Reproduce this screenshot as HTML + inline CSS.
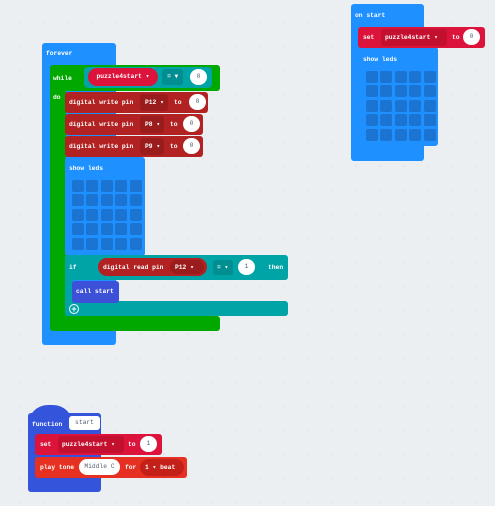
<!DOCTYPE html>
<html><head><meta charset="utf-8"><style>
body{margin:0;width:495px;height:506px;overflow:hidden;background:#eceff1;position:relative;
background-image:radial-gradient(#dfe2e5 0.7px,transparent 1px);background-size:24px 24px;background-position:8px 10px}
.b{position:absolute;border-radius:3px}
.t{position:absolute;color:#fff;font:bold 6.3px "Liberation Mono",monospace;white-space:nowrap;line-height:9px}
.blue{background:#1e90ff}.green{background:#00a800}.teal{background:#00a4a6}
.pin{background:#b22222}.var{background:#dc143c}.mus{background:#e63022}.fn{background:#3455db}
.pill{position:absolute;border-radius:9px;color:#fff;font:bold 6.3px "Liberation Mono",monospace;line-height:9px;text-align:center;white-space:nowrap}
.w{background:#fff;color:#575e75;font-weight:normal}
.grid{position:absolute;display:grid;grid-template-columns:repeat(5,12px);grid-gap:2.4px}
.grid div{width:12px;height:12px;border-radius:2px;background:#1b74d1}
</style></head><body>

<!-- forever -->
<div class="b blue" style="left:42px;top:43px;width:74px;height:302px"></div>
<div class="t" style="left:46px;top:49px">forever</div>
<!-- while -->
<div class="b green" style="left:50px;top:65px;width:170px;height:26px"></div>
<div class="b green" style="left:50px;top:65px;width:16px;height:266px"></div>
<div class="b green" style="left:50px;top:316px;width:170px;height:15px"></div>
<div class="t" style="left:53px;top:74px">while</div>
<div class="t" style="left:53px;top:93px">do</div>
<div class="b teal" style="left:84px;top:67px;width:128px;height:21px;border-radius:4px"></div>
<div class="pill var" style="left:88px;top:68px;width:70px;height:18px;line-height:18px">puzzle4start ▾</div>
<div class="b" style="left:162px;top:69px;width:21px;height:16px;background:#008e90;color:#fff;font:bold 6.3px 'Liberation Mono';text-align:center;line-height:16px">= ▾</div>
<div class="pill w" style="left:190px;top:69px;width:17px;height:16px;line-height:16px">0</div>

<!-- digital writes -->
<div class="b pin" style="left:65px;top:92px;width:143px;height:21px"></div>
<div class="t" style="left:69px;top:98px">digital write pin</div>
<div class="b" style="left:140px;top:94px;width:28px;height:17px;background:#9a1c1c"></div>
<div class="t" style="left:145px;top:98px">P12 ▾</div>
<div class="t" style="left:174px;top:98px">to</div>
<div class="pill w" style="left:189px;top:94px;width:17px;height:16px;line-height:16px">0</div>

<div class="b pin" style="left:65px;top:114px;width:138px;height:21px"></div>
<div class="t" style="left:69px;top:120px">digital write pin</div>
<div class="b" style="left:140px;top:116px;width:24px;height:17px;background:#9a1c1c"></div>
<div class="t" style="left:145px;top:120px">P8 ▾</div>
<div class="t" style="left:170px;top:120px">to</div>
<div class="pill w" style="left:183px;top:116px;width:17px;height:16px;line-height:16px">0</div>

<div class="b pin" style="left:65px;top:136px;width:138px;height:21px"></div>
<div class="t" style="left:69px;top:142px">digital write pin</div>
<div class="b" style="left:140px;top:138px;width:24px;height:17px;background:#9a1c1c"></div>
<div class="t" style="left:145px;top:142px">P9 ▾</div>
<div class="t" style="left:170px;top:142px">to</div>
<div class="pill w" style="left:183px;top:138px;width:17px;height:16px;line-height:16px">0</div>

<!-- show leds -->
<div class="b blue" style="left:65px;top:157px;width:80px;height:99px"></div>
<div class="t" style="left:69px;top:164px">show leds</div>
<div class="grid" style="left:72px;top:180px"><div></div><div></div><div></div><div></div><div></div><div></div><div></div><div></div><div></div><div></div><div></div><div></div><div></div><div></div><div></div><div></div><div></div><div></div><div></div><div></div><div></div><div></div><div></div><div></div><div></div></div>

<!-- if -->
<div class="b teal" style="left:65px;top:255px;width:223px;height:25px"></div>
<div class="b teal" style="left:65px;top:255px;width:8px;height:61px"></div>
<div class="b teal" style="left:65px;top:301px;width:223px;height:15px"></div>
<div class="t" style="left:69px;top:263px">if</div>
<div class="b" style="left:98px;top:258px;width:109px;height:18px;background:#b22222;border-radius:9px"></div>
<div class="t" style="left:103px;top:263px">digital read pin</div>
<div class="b" style="left:170px;top:260px;width:34px;height:14px;background:#9a1c1c;border-radius:7px"></div>
<div class="t" style="left:175px;top:263px">P12 ▾</div>
<div class="b" style="left:213px;top:260px;width:20px;height:15px;background:#008e90"></div>
<div class="t" style="left:217px;top:263px">= ▾</div>
<div class="pill w" style="left:238px;top:259px;width:17px;height:16px;line-height:16px">1</div>
<div class="t" style="left:268px;top:263px">then</div>
<div class="b fn" style="left:72px;top:281px;width:47px;height:22px;background:#3c50d8"></div>
<div class="t" style="left:76px;top:287px">call start</div>
<div style="position:absolute;left:69px;top:304px;width:8px;height:8px;border:1px solid #fff;border-radius:50%;color:#fff;font:bold 9px 'Liberation Sans';line-height:8px;text-align:center">+</div>

<!-- on start -->
<div class="b blue" style="left:351px;top:4px;width:73px;height:157px"></div>
<div class="t" style="left:355px;top:11px">on start</div>
<div class="b blue" style="left:358px;top:47px;width:80px;height:99px"></div>
<div class="b var" style="left:358px;top:27px;width:127px;height:21px"></div>
<div class="t" style="left:363px;top:33px">set</div>
<div class="b" style="left:381px;top:29px;width:66px;height:17px;background:#c3102f"></div>
<div class="t" style="left:385px;top:33px">puzzle4start ▾</div>
<div class="t" style="left:452px;top:33px">to</div>
<div class="pill w" style="left:463px;top:29px;width:17px;height:16px;line-height:16px">0</div>
<div class="t" style="left:363px;top:55px">show leds</div>
<div class="grid" style="left:366px;top:71px"><div></div><div></div><div></div><div></div><div></div><div></div><div></div><div></div><div></div><div></div><div></div><div></div><div></div><div></div><div></div><div></div><div></div><div></div><div></div><div></div><div></div><div></div><div></div><div></div><div></div></div>

<!-- function -->
<div class="b fn" style="left:28px;top:413px;width:73px;height:79px"></div>
<div style="position:absolute;left:28px;top:405px;width:45px;height:20px;border-radius:22px 22px 0 0;background:#3455db"></div>
<div class="t" style="left:32px;top:420px">function</div>
<div class="b" style="left:69px;top:416px;width:31px;height:14px;background:#fff;color:#575e75;font:6.3px 'Liberation Mono';line-height:14px;text-align:center">start</div>
<div class="b var" style="left:35px;top:434px;width:127px;height:21px"></div>
<div class="t" style="left:40px;top:440px">set</div>
<div class="b" style="left:58px;top:436px;width:66px;height:17px;background:#c3102f"></div>
<div class="t" style="left:62px;top:440px">puzzle4start ▾</div>
<div class="t" style="left:128px;top:440px">to</div>
<div class="pill w" style="left:140px;top:436px;width:17px;height:16px;line-height:16px">1</div>
<div class="b mus" style="left:35px;top:457px;width:152px;height:21px"></div>
<div class="t" style="left:40px;top:463px">play tone</div>
<div class="pill w" style="left:79px;top:459px;width:41px;height:16px;line-height:16px">Middle C</div>
<div class="t" style="left:125px;top:463px">for</div>
<div class="b" style="left:140px;top:459px;width:44px;height:17px;background:#c4201a;border-radius:9px"></div>
<div class="t" style="left:145px;top:463px">1 ▾ beat</div>
</body></html>
